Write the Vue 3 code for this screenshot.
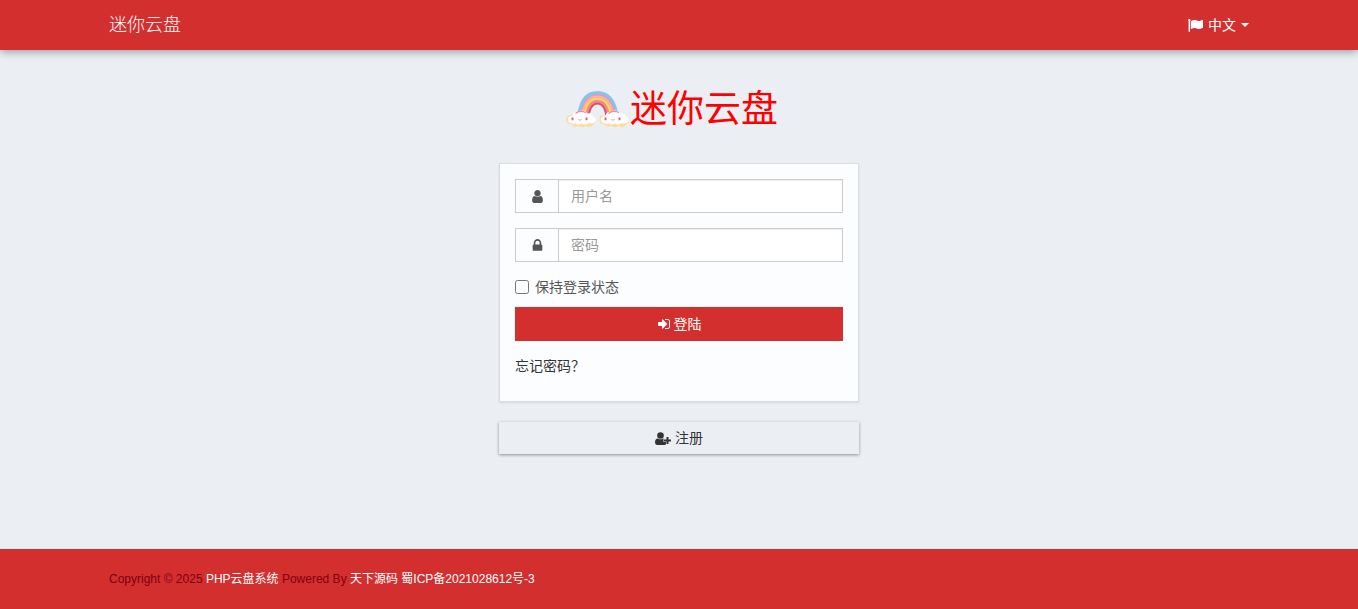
<script setup>
import { ref } from 'vue'

const username = ref('')
const password = ref('')
const remember = ref(false)
</script>

<template>
  <div class="page">
    <header class="navbar">
      <div class="container bar">
        <a href="#" class="brand">迷你云盘</a>
        <button type="button" class="language">
          <svg class="flag" viewBox="0 0 15 13" aria-hidden="true">
            <path d="M1.3 0A1.2 1.2 0 0 1 2 2.2V12.6Q2 13 1.6 13H1Q.6 13 .6 12.6V2.2A1.2 1.2 0 0 1 1.3 0Z" />
            <path d="M2.800 2.2C5.300.8 7.2.7 9 1.6 10.600 2.400 11.8 2 14.2.9Q15 .6 15 1.5V8.200Q15 8.800 14.400 9.100C12 10.300 10.500 10.400 8.800 9.500 7 8.600 5.300 8.900 2.800 10.300Z" />
          </svg>
          <span>中文</span>
          <span class="caret"></span>
        </button>
      </div>
    </header>

    <main class="main">
      <h1 class="logo">
        <svg class="rainbow" viewBox="0 0 64 38" aria-hidden="true">
          <g fill="none" stroke-width="2.800">
            <path stroke="#7cc9ef" d="M12.500 27C14 11 20.500 2.500 31.500 2.500S49.500 11 51 27" />
            <path stroke="#c9a2d4" d="M14.500 27C16 13 21.500 4.800 31.500 4.800S47.500 13 49 27" />
            <path stroke="#fdb09a" d="M16.500 27C18 14.500 22.500 7 31.500 7S45.500 14.500 47 27" />
            <path stroke="#ffd94e" d="M18.500 27C19.500 16 23.500 9.300 31.500 9.300S43.500 16 45 27" />
            <path stroke="#f28b91" d="M20.500 27C21.500 17.500 25 11.500 31.500 11.500S41.500 17.500 42.500 27" />
            <path stroke="#d9536a" stroke-width="2" d="M22.500 27C23.500 18.500 26 13.500 31.500 13.500S39.500 18.500 40.500 27" />
          </g>
          <g id="cloud">
            <path fill="#fbdda0" d="M5 25Q-.5 25.500 .3 30.500 .8 34.500 5.500 34.500 8 38 12 36 16 38.700 19.500 36 24.500 38.500 27 34.700 30.500 33.500 29.500 29L24 25Z" />
            <path fill="#fff" d="M6 33.500Q1 33 2 28.500 3 25.500 6.500 26 7.500 21 12.500 22 18 18.500 21.500 23.500 26 22 27 26.500 31 27.500 29.500 31.500 27 34.500 23 33 19 35.500 16 33.500 12 35.800 9.500 33 8 34.500 6 33.500Z" />
            <path fill="none" stroke="#ef8aa0" stroke-width="1.200" d="M9.500 23.500Q13.500 20 20 22.500" />
            <path fill="none" stroke="#ef8aa0" stroke-width=".8" d="M12.300 29.500Q14 31 15.700 29.500" />
            <path fill="#e5607b" d="M5.500 27.500h2v2.800H5.500zM19.500 27.500h2v2.800h-2z" />
          </g>
          <use href="#cloud" x="33" />
        </svg>
        <span>迷你云盘</span>
      </h1>

      <form class="panel" @submit.prevent>
        <div class="field">
          <label class="addon" for="username" aria-label="用户名">
            <svg class="icon" viewBox="0 0 1792 1792" aria-hidden="true">
              <path d="M1536 1399q0 109-62.500 187t-150.500 78h-854q-88 0-150.500-78t-62.500-187q0-85 8.500-160.500t31.500-152 58.500-131 94-89 134.500-34.500q131 128 313 128t313-128q76 0 134.500 34.500t94 89 58.500 131 31.500 152 8.500 160.500zm-256-887q0 159-112.500 271.500t-271.500 112.500-271.500-112.500-112.500-271.500 112.500-271.500 271.500-112.500 271.500 112.500 112.500 271.500z" />
            </svg>
          </label>
          <input id="username" v-model="username" type="text" placeholder="用户名" />
        </div>
        <div class="field">
          <label class="addon" for="password" aria-label="密码">
            <svg class="icon" viewBox="0 0 1792 1792" aria-hidden="true">
              <path d="M640 768h512v-192q0-106-75-181t-181-75-181 75-75 181v192zm832 96v576q0 40-28 68t-68 28h-960q-40 0-68-28t-28-68v-576q0-40 28-68t68-28h32v-192q0-184 132-316t316-132 316 132 132 316v192h32q40 0 68 28t28 68z" />
            </svg>
          </label>
          <input id="password" v-model="password" type="password" placeholder="密码" />
        </div>
        <label class="remember" for="remember">
          <input id="remember" v-model="remember" type="checkbox" />
          <span>保持登录状态</span>
        </label>
        <button type="submit" class="btn login">
          <svg class="icon" viewBox="0 0 1792 1792" aria-hidden="true">
            <path d="M1312 896q0 26-19 45l-544 544q-19 19-45 19t-45-19-19-45v-288h-448q-26 0-45-19t-19-45v-384q0-26 19-45t45-19h448v-288q0-26 19-45t45-19 45 19l544 544q19 19 19 45zm352-352v704q0 119-84.500 203.500t-203.500 84.500h-320q-13 0-22.500-9.500t-9.500-22.500q0-4-1-20t-.5-26.500 3-23.500 10-19.500 20.500-6.500h320q66 0 113-47t47-113v-704q0-66-47-113t-113-47h-312l-11.500-1-11.500-3-8-5.500-7-9-2-13.500q0-4-1-20t-.5-26.500 3-23.500 10-19.500 20.500-6.500h320q119 0 203.500 84.500t84.500 203.500z" />
          </svg>
          <span>登陆</span>
        </button>
        <a href="#" class="forgot">忘记密码？</a>
      </form>

      <button type="button" class="btn register">
        <svg class="user-plus" viewBox="0 0 16 13" aria-hidden="true">
          <circle cx="5.500" cy="3.500" r="3.300" />
          <path d="M3 6.400Q5.500 8.300 8 6.400 8.600 6.400 9.200 6.900H8.500V10.100H11V12.300Q10.500 12.900 9.500 12.900H2Q0 12.900 0 10.500 0 6.400 3 6.400Z" />
          <path d="M11.500 5h2v2.500H16v2h-2.500V12h-2V9.500H9v-2h2.500Z" />
        </svg>
        <span>注册</span>
      </button>
    </main>

    <footer class="footer">
      <div class="container">
        Copyright © 2025 <a href="#">PHP云盘系统</a> Powered By <a href="#">天下源码</a> <a href="#">蜀ICP备2021028612号-3</a>
      </div>
    </footer>
  </div>
</template>

<style>
body {
  margin: 0;
}
</style>

<style scoped>
.page {
  display: flex;
  flex-direction: column;
  min-height: 100vh;
  background: #ebeff4;
  color: #555;
  font: 14px/20px "Liberation Sans", "Noto Sans CJK SC", sans-serif;
}
.page * {
  box-sizing: border-box;
}
a {
  text-decoration: none;
}
svg {
  flex: none;
  fill: currentColor;
}
.container {
  width: 100%;
  max-width: 1170px;
  margin: 0 auto;
  padding: 0 15px;
}
.navbar {
  background: #d32f2f;
  box-shadow: 0 2px 8px rgba(0, 0, 0, 0.35);
}
.bar {
  display: flex;
  align-items: center;
  justify-content: space-between;
  height: 50px;
}
.brand {
  color: #fff;
  font-size: 18px;
  font-weight: 300;
}
.language {
  display: flex;
  align-items: center;
  gap: 5px;
  padding: 0;
  border: 0;
  background: none;
  color: #fff;
  font: inherit;
}
.flag {
  width: 15px;
  height: 13px;
}
.caret {
  border: 4px solid transparent;
  border-top-color: #fff;
  border-bottom: 0;
}
.main {
  width: 100%;
  max-width: 360px;
  margin: 0 auto;
  padding: 30px 0;
}
.logo {
  display: flex;
  align-items: center;
  height: 57px;
  margin: 0 0 26px;
  padding-left: 67px;
  color: #f00;
  font-size: 37px;
  font-weight: 400;
  line-height: 54px;
}
.logo span {
  align-self: flex-end;
}
.rainbow {
  width: 64px;
  height: 38px;
}
.panel {
  padding: 15px 15px 25px;
  border: 1px solid #d9dce0;
  background: #fcfdff;
  box-shadow: 0 1px 2px rgba(0, 0, 0, 0.1);
}
.field {
  display: flex;
  height: 34px;
  margin-bottom: 15px;
  border: 1px solid #ccc;
}
.addon {
  display: flex;
  flex: none;
  align-items: center;
  justify-content: center;
  width: 43px;
  border-right: 1px solid #ccc;
}
.icon {
  width: 14px;
  height: 14px;
}
.addon .icon {
  width: 15px;
  height: 15px;
}
.field input {
  flex: 1;
  min-width: 0;
  padding: 0 12px;
  border: 0;
  outline: 0;
  background: #fff;
  box-shadow: inset 0 1px 1px rgba(0, 0, 0, 0.075);
  color: #555;
  font: inherit;
}
.field input::placeholder {
  color: #999;
}
.remember {
  display: flex;
  align-items: center;
  gap: 6px;
  margin-bottom: 10px;
}
.remember input {
  width: 14px;
  height: 14px;
  margin: 0;
}
.btn {
  display: flex;
  align-items: center;
  justify-content: center;
  gap: 3px;
  width: 100%;
  height: 34px;
  padding: 0;
  border: 0;
  font: inherit;
}
.login {
  margin-bottom: 15px;
  background: #d32f2f;
  color: #fff;
}
.forgot {
  display: block;
  color: #333;
}
.register {
  gap: 4px;
  height: 32px;
  margin-top: 20px;
  background: #ebeff4;
  box-shadow: 0 1px 3px rgba(0, 0, 0, 0.4);
  color: #333;
}
.user-plus {
  width: 16px;
  height: 13px;
}
.footer {
  margin-top: auto;
  padding: 20px 0;
  background: #d32f2f;
  color: #7f0010;
  font-size: 12px;
}
.footer a {
  color: #fff;
}
</style>
